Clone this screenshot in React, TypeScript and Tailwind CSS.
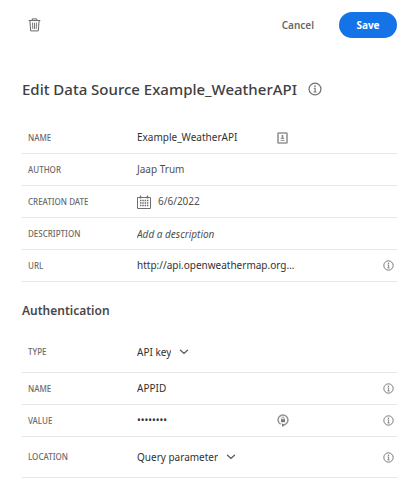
import type { ReactNode } from "react";

function InfoIcon({ size }: { size: number }) {
  return (
    <svg width={size} height={size} viewBox="0 0 12 12" fill="none" stroke="#6e6e6e" aria-hidden="true">
      <circle cx="6" cy="6" r="5.1" strokeWidth="1" />
      <circle cx="6" cy="3.5" r="0.75" fill="#6e6e6e" stroke="none" />
      <path d="M5 5.3h1.1v3.2M4.8 8.6h2.4" strokeWidth="0.9" />
    </svg>
  );
}

function InfoButton({ label }: { label: string }) {
  return (
    <button type="button" aria-label={label} className="mr-[3px] ml-auto">
      <InfoIcon size={11} />
    </button>
  );
}

function TrashIcon() {
  return (
    <svg width="13" height="14" viewBox="0 0 13 14" fill="none" stroke="#6a6a6a" aria-hidden="true">
      <path d="M0.7 2.5h11.6M4.2 2.3V0.9h4.6v1.4" strokeWidth="1" />
      <path d="M1.9 2.8l0.8 10.1h7.6l0.8-10.1" strokeWidth="1" />
      <path d="M4.5 4.6l0.3 6.3M6.5 4.6v6.3M8.5 4.6l-0.3 6.3" strokeWidth="0.9" />
    </svg>
  );
}

function CalendarIcon() {
  return (
    <svg width="14" height="14" viewBox="0 0 14 14" fill="none" stroke="#6e6e6e" aria-hidden="true">
      <path d="M0.5 2.5h13v11h-13z" strokeWidth="1" />
      <path d="M3.5 0.5v3M10.5 0.5v3" strokeWidth="1.3" />
      <path d="M3 5.5h8.5M3 8h8.5M3 10.5h8.5" strokeWidth="1.5" strokeDasharray="1.5 0.8" />
    </svg>
  );
}

function ContactIcon() {
  return (
    <svg width="11" height="12" viewBox="0 0 11 12" fill="none" stroke="#949494" aria-hidden="true">
      <rect x="1" y="1" width="9" height="10" rx="0.6" strokeWidth="1.6" />
      <circle cx="5.5" cy="4" r="0.9" fill="#777" stroke="none" />
      <path d="M3.6 6.8c0-2.2 3.8-2.2 3.8 0z" fill="#777" stroke="none" />
      <path d="M3.5 8.4h4" strokeWidth="1" />
    </svg>
  );
}

function KeyLockIcon() {
  return (
    <svg width="12" height="13" viewBox="0 0 12 13" fill="none" stroke="#949494" aria-hidden="true">
      <path d="M3.6 10.2A4.9 4.9 0 1 1 8.6 10.1L6.2 11" strokeWidth="1.5" />
      <path d="M4.6 9.2l3 1.8-2.2 2z" fill="#777" stroke="none" />
      <rect x="4" y="5.2" width="4" height="3" fill="#777" stroke="none" />
      <path d="M4.8 5.3V4.2a1.2 1.2 0 0 1 2.4 0v1.1" strokeWidth="0.9" />
    </svg>
  );
}

function Chevron() {
  return (
    <svg width="10" height="6" viewBox="0 0 10 6" fill="none" stroke="#5f5f5f" aria-hidden="true">
      <path d="M1.5 1.2L5 4.4l3.5-3.2" strokeWidth="1.4" strokeLinecap="round" />
    </svg>
  );
}

function Row({ id, label, tall, children }: { id?: string; label: string; tall?: boolean; children: ReactNode }) {
  const text = "w-[109px] shrink-0 text-[8px] font-medium uppercase text-[#6a6a6a]";
  return (
    <div className={`flex items-center border-b border-[#e6e6e6] pl-1.5 ${tall ? "h-[41px]" : "h-8"}`}>
      {id ? (
        <label htmlFor={id} className={text}>{label}</label>
      ) : (
        <span className={text}>{label}</span>
      )}
      {children}
    </div>
  );
}

function Field({ id, value, type = "text" }: { id: string; value: string; type?: string }) {
  return (
    <input id={id} type={type} defaultValue={value} className="w-[160px] min-w-0 bg-transparent pb-0.5 text-[#323232] outline-none" />
  );
}

function Picker({ id, options }: { id: string; options: string[] }) {
  return (
    <div className="flex items-center gap-2">
      <select id={id} className="field-sizing-content appearance-none bg-transparent text-[#323232] outline-none">
        {options.map((option) => (
          <option key={option}>{option}</option>
        ))}
      </select>
      <Chevron />
    </div>
  );
}

export default function App() {
  return (
    <form className="bg-white px-[22px] pt-3 pb-3 font-['Noto_Sans','Open_Sans',sans-serif] text-[10px] leading-4 text-[#505050]">
      <header className="flex h-[26px] items-center pl-1.5">
        <button type="button" aria-label="Delete"><TrashIcon /></button>
        <button type="button" className="mr-[25px] ml-auto font-semibold text-[#6a6a6a]">Cancel</button>
        <button type="button" className="h-[26px] w-[58px] rounded-full bg-[#1473e6] font-bold text-white">Save</button>
      </header>

      <div className="mt-10 flex h-[22px] items-center gap-[11px]">
        <h1 className="text-[15px] leading-[22px] font-medium text-[#404040]">Edit Data Source Example_WeatherAPI</h1>
        <button type="button" aria-label="About data sources"><InfoIcon size={14} /></button>
      </div>

      <section className="mt-[22px]">
        <Row id="name" label="Name">
          <Field id="name" value="Example_WeatherAPI" />
          <button type="button" aria-label="Fill in contact" className="-ml-5"><ContactIcon /></button>
        </Row>
        <Row label="Author"><span className="pb-0.5">Jaap Trum</span></Row>
        <Row label="Creation date">
          <span className="flex items-center gap-[7px]"><CalendarIcon /><span className="pb-0.5">6/6/2022</span></span>
        </Row>
        <Row id="description" label="Description">
          <input id="description" placeholder="Add a description" className="w-full min-w-0 bg-transparent outline-none placeholder:text-[#505050] placeholder:italic" />
        </Row>
        <Row id="url" label="URL">
          <Field id="url" value="http://api.openweathermap.org…" />
          <InfoButton label="About the URL" />
        </Row>
      </section>

      <section>
        <h2 className="mt-[19px] mb-[11px] text-[12px] leading-5 font-semibold text-[#484848]">Authentication</h2>
        <Row id="type" label="Type" tall>
          <Picker id="type" options={["API key", "Basic", "Custom"]} />
        </Row>
        <Row id="key-name" label="Name">
          <Field id="key-name" value="APPID" />
          <InfoButton label="About the key name" />
        </Row>
        <Row id="key-value" label="Value">
          <Field id="key-value" value="12345678" type="password" />
          <button type="button" aria-label="Fill in password" className="-ml-5"><KeyLockIcon /></button>
          <InfoButton label="About the key value" />
        </Row>
        <Row id="location" label="Location" tall>
          <Picker id="location" options={["Query parameter", "Header"]} />
          <InfoButton label="About the key location" />
        </Row>
      </section>
    </form>
  );
}
